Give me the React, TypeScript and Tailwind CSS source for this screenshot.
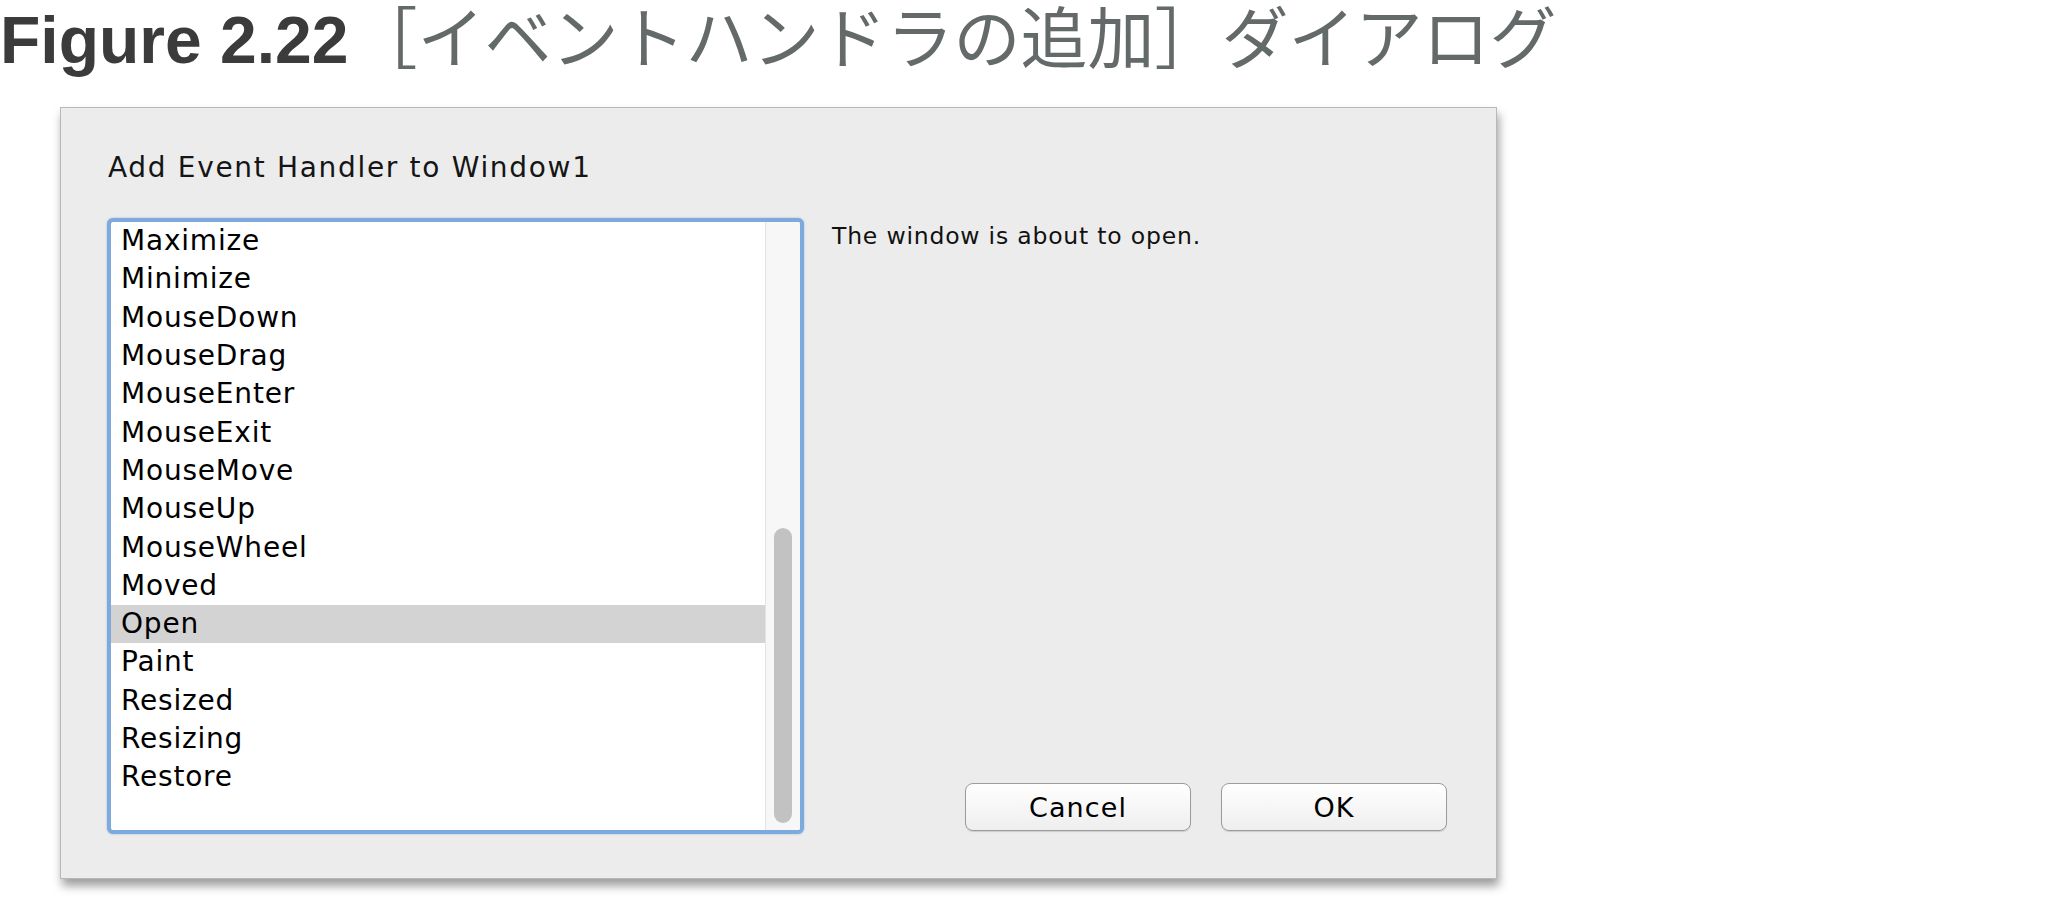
import React from "react";

const events = [
  "Maximize",
  "Minimize",
  "MouseDown",
  "MouseDrag",
  "MouseEnter",
  "MouseExit",
  "MouseMove",
  "MouseUp",
  "MouseWheel",
  "Moved",
  "Open",
  "Paint",
  "Resized",
  "Resizing",
  "Restore",
];

const selected = "Open";

function MacButton({ label }: { label: string }) {
  return (
    <button className="w-[226px] h-[48px] rounded-[8px] border border-[#9c9c9c] bg-gradient-to-b from-white to-[#eeeeee] shadow-[0_1px_1px_rgba(0,0,0,0.14)] text-[27px] tracking-[0.04em] text-black leading-none">
      {label}
    </button>
  );
}

export default function App() {
  return (
    <div className="min-h-screen w-[2048px] bg-white">
      {/* Heading */}
      <div className="h-[107px] pt-[5px]">
        <h1 className="flex items-baseline text-[66px] leading-[66px] whitespace-nowrap">
          <span className="font-bold text-[#3b3b3b] font-['Liberation_Sans',Arial,sans-serif]">
            Figure 2.22
          </span>
          <span className="inline-block ml-[2px] pt-[4px] text-[67px] leading-[50px] font-normal text-[#646969] font-['Noto_Sans_CJK_JP','Noto_Sans_CJK_SC',sans-serif]">
            ［イベントハンドラの追加］ダイアログ
          </span>
        </h1>
      </div>

      {/* Dialog */}
      <div className="ml-[60px] w-[1437px] h-[772px] bg-[#ececec] border border-[#b8b8b8] shadow-[2px_7px_9px_rgba(0,0,0,0.38)] font-['DejaVu_Sans',sans-serif] tracking-[0.05em]">
        <div className="pl-[47px] pt-[45px] text-[28px] tracking-[0.06em] leading-[30px] text-[#151515]">
          Add Event Handler to Window1
        </div>

        <div className="flex mt-[35px] pl-[46px] pr-[49px]">
          {/* List */}
          <div className="w-[697px] h-[616px] rounded-[6px] border-[4px] border-[#7ea9dd] shadow-[0_0_2px_rgba(90,140,210,0.6)] bg-white flex overflow-hidden">
            <div className="flex-1">
              {events.map((e) => (
                <div
                  key={e}
                  className={
                    "h-[38.3px] pl-[10px] flex items-center text-[28px] text-black " +
                    (e === selected ? "bg-[#d3d3d3]" : "")
                  }
                >
                  {e}
                </div>
              ))}
            </div>
            <div className="w-[35px] bg-[#f7f7f7] border-l border-[#e3e3e3] flex flex-col items-center pt-[306px] pb-[7px]">
              <div className="w-[18px] flex-1 rounded-full bg-[#c2c2c2]" />
            </div>
          </div>

          {/* Description and buttons */}
          <div className="flex-1 ml-[28px] flex flex-col justify-between">
            <p className="pt-[5px] text-[23.5px] leading-[26px] text-[#111]">
              The window is about to open.
            </p>
            <div className="flex justify-end gap-[30px] mb-[3px]">
              <MacButton label="Cancel" />
              <MacButton label="OK" />
            </div>
          </div>
        </div>
      </div>
    </div>
  );
}
